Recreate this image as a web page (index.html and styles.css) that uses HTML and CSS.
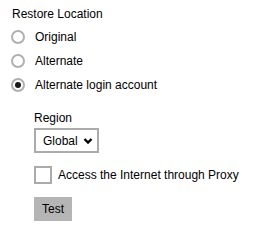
FILE: index.html
```html
<!DOCTYPE html>
<html lang="en">
<head>
    <meta charset="UTF-8">
    <title>Restore Location</title>
    <link rel="stylesheet" href="styles.css">
</head>
<body>
    <div class="panel">
        <div class="title">Restore Location</div>

        <div class="options">
            <label class="option"><input type="radio" name="loc"> Original</label>
            <label class="option"><input type="radio" name="loc"> Alternate</label>
            <label class="option"><input type="radio" name="loc" checked> Alternate login account</label>
        </div>

        <!-- alternate login account settings -->
        <div class="sub">
            <div class="label">Region</div>
            <div class="select-wrap">
                <select class="region">
                    <option>Global</option>
                    <option>China</option>
                </select>
                <svg class="chevron" width="10" height="8" viewBox="0 0 10 8">
                    <path d="M1.5 2 L5 5.5 L8.5 2" fill="none" stroke="#000" stroke-width="2.4"/>
                </svg>
            </div>
            <label class="check"><input type="checkbox"> Access the Internet through Proxy</label>
            <button class="test-btn">Test</button>
        </div>
    </div>
</body>
</html>
```

FILE: styles.css
```css
body { margin: 0; background: #fff; font-family: "Liberation Sans", Arial, sans-serif; font-size: 12px; color: #000; }
.panel { padding: 4px 0 0 12px; }
.title { height: 21px; line-height: 20px; }
.options { display: flex; flex-direction: column; }
.option { display: flex; align-items: center; gap: 10px; height: 24px; }
.option input { appearance: none; margin: 0 0 0 -1px; width: 14px; height: 14px; border: 2px solid #b0b0b0; border-radius: 50%; box-sizing: border-box; display: grid; place-items: center; }
.option input:checked::after { content: ""; width: 6px; height: 6px; border-radius: 50%; background: #1a1a1a; }
.sub { padding: 11px 0 0 22px; display: flex; flex-direction: column; align-items: flex-start; }
.label { height: 20px; line-height: 20px; }
.select-wrap { position: relative; }
.region { appearance: none; margin: 0; width: 65px; height: 25px; border: 2px solid #ababab; border-radius: 0; background: #fff; font: inherit; font-size: 12px; color: #000; padding: 0 0 0 7px; }
.chevron { position: absolute; right: 6px; top: 9px; pointer-events: none; }
.check { display: flex; align-items: center; gap: 6px; margin-top: 13px; height: 18px; }
.check input { appearance: none; margin: 0; width: 18px; height: 18px; border: 2px solid #ababab; box-sizing: border-box; }
.test-btn { margin-top: 13px; width: 38px; height: 24px; border: none; background: #b5b5b5; font: inherit; font-size: 12px; color: #000; padding: 0; }
```
